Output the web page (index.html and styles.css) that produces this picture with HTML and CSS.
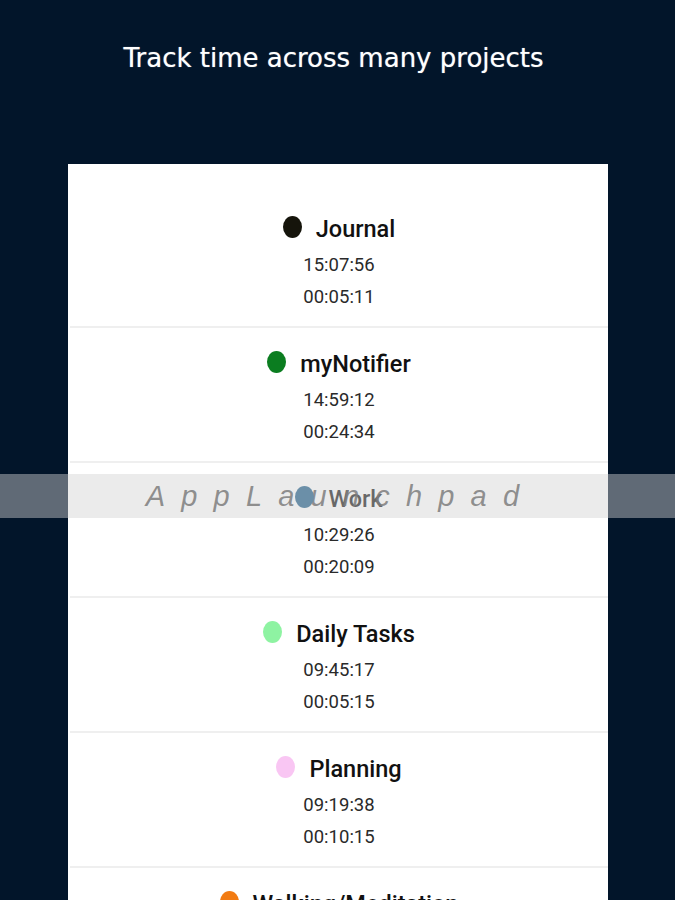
FILE: index.html
```html
<!DOCTYPE html>
<html>
<head>
<meta charset="utf-8">
<link rel="stylesheet" href="styles.css">
</head>
<body>
<div class="page">
  <header class="hero">
    <h1 class="hero-title">Track time across many projects</h1>
  </header>
  <main class="card">
    <div class="row">
      <div class="row-title"><span class="dot" style="background:#15140b"></span><span class="name">Journal</span></div>
      <div class="time">15:07:56</div>
      <div class="time">00:05:11</div>
    </div>
    <div class="row">
      <div class="row-title"><span class="dot" style="background:#0b7d20"></span><span class="name">myNotifier</span></div>
      <div class="time">14:59:12</div>
      <div class="time">00:24:34</div>
    </div>
    <div class="row">
      <div class="row-title"><span class="dot dot-top" style="background:#6b8fa8"></span><span class="name">Work</span></div>
      <div class="time">10:29:26</div>
      <div class="time">00:20:09</div>
    </div>
    <div class="row">
      <div class="row-title"><span class="dot" style="background:#8ef3a2"></span><span class="name">Daily Tasks</span></div>
      <div class="time">09:45:17</div>
      <div class="time">00:05:15</div>
    </div>
    <div class="row">
      <div class="row-title"><span class="dot" style="background:#f9c6f3"></span><span class="name">Planning</span></div>
      <div class="time">09:19:38</div>
      <div class="time">00:10:15</div>
    </div>
    <div class="row">
      <div class="row-title"><span class="dot" style="background:#f27b12"></span><span class="name">Walking/Meditation</span></div>
      <div class="time">08:12:40</div>
      <div class="time">00:15:02</div>
    </div>
  </main>
  <div class="watermark"><span class="wm-text">AppLaunchpad</span></div>
</div>
</body>
</html>
```

FILE: styles.css
```css
html, body {
  margin: 0;
  padding: 0;
  background: #02152a;
}
.page {
  position: relative;
  width: 675px;
  height: 900px;
  overflow: hidden;
  background: #02152a;
}
.hero {
  height: 164px;
  display: flex;
  justify-content: center;
  padding-top: 38px;
  padding-right: 8px;
  box-sizing: border-box;
}
.hero-title {
  margin: 0;
  color: #ffffff;
  font-family: "DejaVu Sans", Verdana, sans-serif;
  font-weight: normal;
  font-size: 26px;
  line-height: 40px;
  letter-spacing: 0;
  text-shadow: 0 0 1px rgba(255, 255, 255, 0.6);
}
.card {
  margin-left: 68px;
  width: 540px;
  background: #ffffff;
  padding-top: 29px;
  min-height: 736px;
}
.row {
  height: 135px;
  box-sizing: border-box;
  padding-top: 21px;
  border-bottom: 2px solid #efefef;
  margin-left: 2px;
  display: flex;
  flex-direction: column;
  align-items: center;
  font-family: Roboto, "Noto Sans", sans-serif;
}
.row-title {
  display: flex;
  align-items: center;
  height: 30px;
  margin-bottom: 5px;
}
.dot {
  width: 19px;
  height: 22px;
  border-radius: 50%;
  margin-right: 14px;
  margin-top: -4px;
}
.dot-top {
  position: relative;
  z-index: 3;
}
.name {
  font-size: 23.5px;
  font-weight: 500;
  color: #111111;
}
.time {
  font-size: 18.5px;
  line-height: 32px;
  color: #2a2a2a;
}
.watermark {
  position: absolute;
  left: 0;
  right: 0;
  top: 474px;
  height: 44px;
  z-index: 2;
  background: rgba(211, 211, 211, 0.45);
  display: flex;
  justify-content: center;
  align-items: center;
}
.wm-text {
  font-family: "Liberation Sans", Arial, sans-serif;
  font-style: italic;
  font-size: 29px;
  letter-spacing: 16.2px;
  color: rgba(125, 125, 125, 0.85);
  margin-right: -6px;
}
```
